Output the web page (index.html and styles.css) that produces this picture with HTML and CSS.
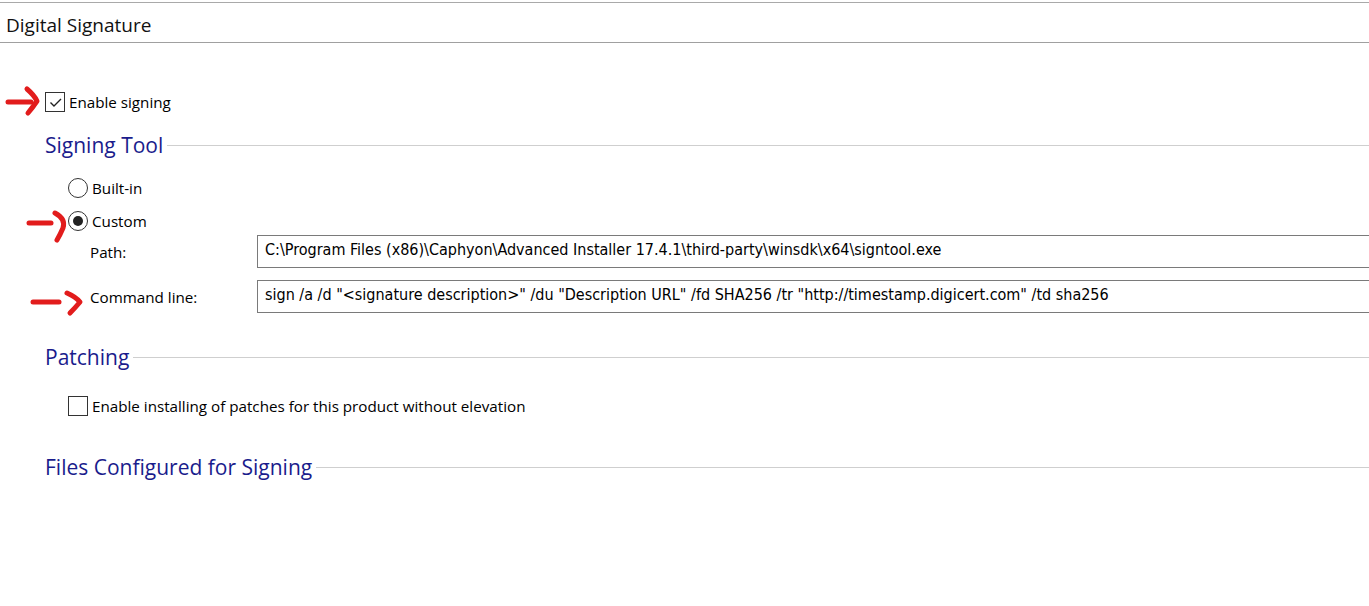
FILE: index.html
```html
<!DOCTYPE html>
<html lang="en">
<head>
    <meta charset="UTF-8">
    <title>Digital Signature</title>
    <link rel="stylesheet" href="styles.css">
</head>
<body>
    <div class="page-title">Digital Signature</div>

    <div class="content">
        <label class="check-row top-check">
            <span class="check-box checked">
                <svg width="17" height="17" viewBox="0 0 17 17"><path d="M3.5 8.5 L7 12 L14 5" fill="none" stroke="#222" stroke-width="1.4"/></svg>
            </span>
            <span>Enable signing</span>
        </label>

        <div class="group-title signing-title"><span>Signing Tool</span><div class="rule"></div></div>

        <label class="check-row radio-row builtin">
            <span class="radio"></span>
            <span>Built-in</span>
        </label>
        <label class="check-row radio-row custom">
            <span class="radio selected"></span>
            <span>Custom</span>
        </label>

        <div class="field-row path-row">
            <div class="field-label">Path:</div>
            <div class="field-input">C:\Program Files (x86)\Caphyon\Advanced Installer 17.4.1\third-party\winsdk\x64\signtool.exe</div>
        </div>
        <div class="field-row cmd-row">
            <div class="field-label">Command line:</div>
            <div class="field-input">sign /a /d "&lt;signature description&gt;" /du "Description URL" /fd SHA256 /tr "http://timestamp.digicert.com" /td sha256</div>
        </div>

        <div class="group-title patching-title"><span>Patching</span><div class="rule"></div></div>

        <label class="check-row patch-check">
            <span class="check-box"></span>
            <span>Enable installing of patches for this product without elevation</span>
        </label>

        <div class="group-title files-title"><span>Files Configured for Signing</span><div class="rule"></div></div>
    </div>

    <!-- hand drawn markers -->
    <svg class="markers" width="120" height="330" viewBox="0 0 120 330">
        <g fill="none" stroke="#e21c1c" stroke-width="5" stroke-linecap="round" stroke-linejoin="round">
            <path d="M8 102 L31 102"/>
            <path d="M27 89 Q34 95 37 101 Q33 107 28 113"/>
            <path d="M29 223 L51 223"/>
            <path d="M55 213 Q66 219 63 228 Q60 235 57 240"/>
            <path d="M33 302 L59 302"/>
            <path d="M67 293 Q76 297 80 302 Q75 308 70 313"/>
        </g>
    </svg>
</body>
</html>
```

FILE: styles.css
```css
* {
    margin: 0;
    padding: 0;
    box-sizing: border-box;
}

body {
    font-family: 'Open Sans', 'Noto Sans', sans-serif;
    background: #fff;
    color: #000;
    width: 1369px;
    height: 606px;
    overflow: hidden;
    position: relative;
}

.page-title {
    margin-top: 2px;
    height: 41px;
    border-top: 1px solid #a9a9a9;
    border-bottom: 1px solid #a0a0a0;
    padding-left: 6px;
    font-size: 19px;
    line-height: 44px;
    color: #111;
}

.content {
    display: flex;
    flex-direction: column;
    padding-left: 45px;
}

.check-row {
    display: flex;
    align-items: center;
    gap: 4px;
    height: 20px;
    font-size: 15.2px;
}

.check-box {
    width: 20px;
    height: 20px;
    border: 1px solid #333;
    display: flex;
    align-items: center;
    justify-content: center;
    background: #fff;
}

.radio {
    width: 20px;
    height: 20px;
    border: 1px solid #333;
    border-radius: 50%;
    display: flex;
    align-items: center;
    justify-content: center;
}

.radio.selected::after {
    content: "";
    width: 10px;
    height: 10px;
    border-radius: 50%;
    background: #222;
}

.top-check { margin-top: 49px; }

.group-title {
    display: flex;
    align-items: center;
    height: 24px;
    font-size: 21px;
    color: #1a1c8c;
}

.group-title .rule {
    flex: 1;
    height: 1px;
    background: #cfcfcf;
    margin-left: 4px;
}

.signing-title { margin-top: 21px; }

.radio-row { margin-left: 23px; }
.builtin { margin-top: 21px; }
.custom { margin-top: 13px; }

.field-row {
    display: flex;
    align-items: center;
    height: 33px;
}

.field-label {
    flex-shrink: 0;
    width: 212px;
    padding-left: 45px;
    font-size: 15.2px;
}

.field-input {
    flex-shrink: 0;
    width: 1140px;
    height: 33px;
    border: 1px solid #7a7a7a;
    font-family: 'DejaVu Sans Condensed', 'DejaVu Sans', sans-serif;
    font-size: 16px;
    line-height: 28px;
    padding-left: 7px;
    white-space: nowrap;
}

.path-row { margin-top: 4px; }
.cmd-row { margin-top: 12px; }

.patching-title { margin-top: 32px; }

.patch-check { margin-top: 27px; margin-left: 23px; }

.files-title { margin-top: 39px; }

.markers {
    position: absolute;
    left: 0;
    top: 0;
    pointer-events: none;
}
```
